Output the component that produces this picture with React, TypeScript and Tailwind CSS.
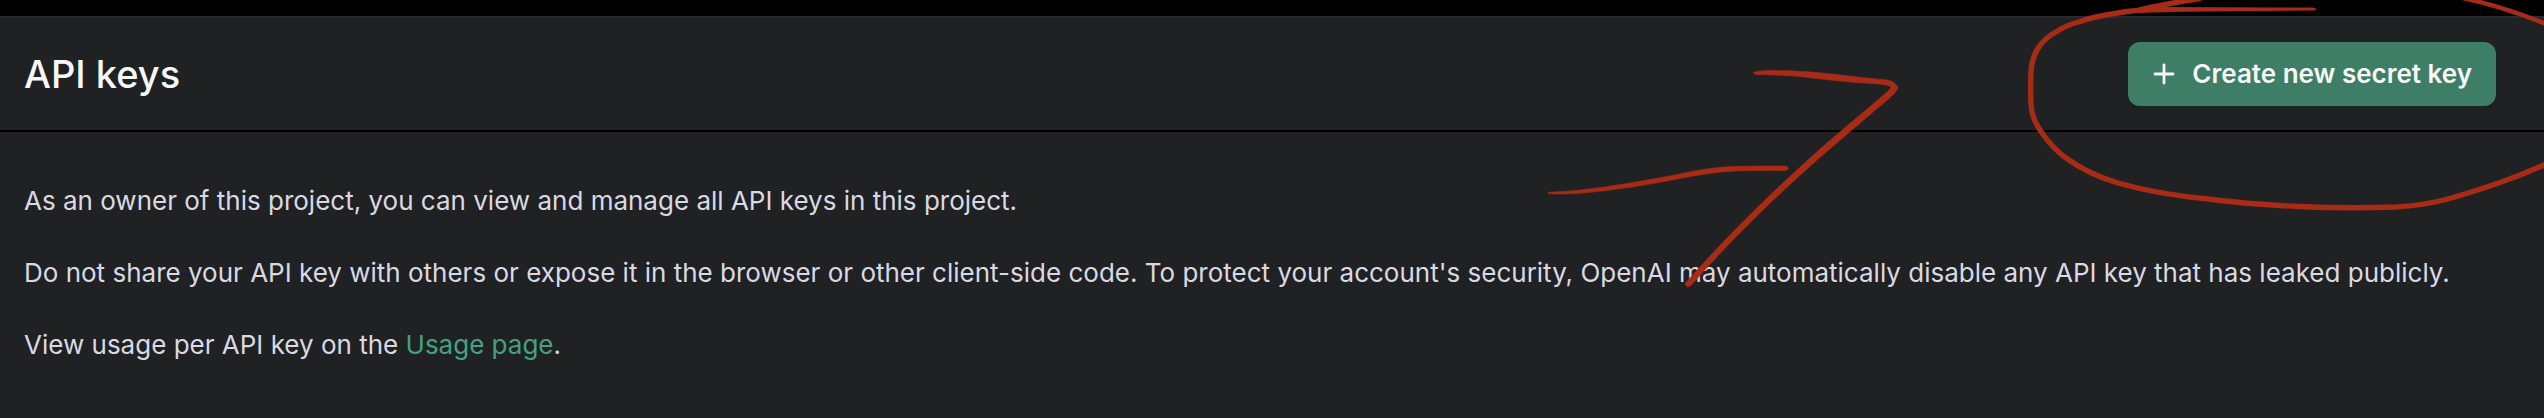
import React from "react";

const notes = [
  "As an owner of this project, you can view and manage all API keys in this project.",
  "Do not share your API key with others or expose it in the browser or other client-side code. To protect your account's security, OpenAI may automatically disable any API key that has leaked publicly.",
];

function PlusIcon() {
  return (
    <svg
      viewBox="0 0 24 24"
      className="size-6 shrink-0"
      fill="none"
      stroke="currentColor"
      strokeWidth="2.8"
      strokeLinecap="round"
      aria-hidden="true"
    >
      <path d="M12 3v18M3 12h18" />
    </svg>
  );
}

// Hand-drawn red marks: an arrow and a loop around the button
function Markup() {
  return (
    <svg
      viewBox="0 0 2544 418"
      preserveAspectRatio="xMaxYMin meet"
      className="pointer-events-none absolute inset-x-0 top-0 w-full text-[#a72b17]"
      fill="currentColor"
      aria-hidden="true"
    >
      {/* Arrow shaft */}
      <path d="M1548 192.5C1557 191.5 1568 191.5 1580 190C1610 187 1635 182 1667 176.5C1690 172 1712 166.5 1740 166.3C1756 166 1772 166 1786 166Q1789 167 1788 169Q1787 170.5 1784 170.5C1770 170.5 1755 170.4 1740 170.7C1700 172 1660 184 1617 189C1600 191.5 1575 194.5 1553 194Q1548 194 1548 192.5Z" stroke="currentColor" strokeWidth="0.6" />
      {/* Arrow head */}
      <path d="M1753.5 72.5C1758 70 1780 70 1800 71.3C1832 73 1850 77 1885 79.7C1893 80.5 1895 83 1898 87.5C1897 91 1893 95 1888 99.5C1860 123 1845 136 1820 157.5C1780 193 1740 230 1691 285.5C1688 288 1684.5 286 1685.5 283C1720 244 1760 203 1815 153.5C1845 127 1865 111 1883 95.5C1888 91 1892 88 1890.5 86.5C1889 85 1880 84 1872 83.5C1840 82 1815 78 1800 76.5C1785 75 1770 75 1757 74.5Q1753 74 1753.5 72.5Z" stroke="currentColor" strokeWidth="0.6" />
      {/* Loop */}
      <g fill="none" stroke="currentColor" strokeWidth="5.4">
        <path d="M2168 9.5C2148 9.5 2132 10 2118 13C2104 15 2092 17 2080 21.5C2070 24 2062 28 2055 32.5C2049 36 2044 40 2040 45.5C2034 53 2031.5 61 2031 72C2030.500 84 2030.500 92 2031 104C2031.500 116 2036 124 2042 133C2049 143 2056 151 2066 158C2081 169 2098 177 2118 183C2146 191 2176 196 2208 199C2238 203 2268 205 2298 206.500C2332 208 2366 208 2396 207C2413 206 2428 204 2444 200C2463 195 2481 189 2500 182.500C2516 177 2531 171 2546 164" />
        <path d="M2201 -2C2180 2 2158 5 2138 10.5" />
        <path strokeWidth="4.4" d="M2458 -3C2488 3 2514 11 2546 24" />
      </g>
      <path d="M2160 7L2313 7.5Q2316 8 2316 9Q2316 10.5 2313 10.5L2160 12Z" />
    </svg>
  );
}

export default function App() {
  return (
    <div className="relative min-h-screen overflow-hidden bg-[#202123] font-['Inter',sans-serif] text-[26px] leading-10 text-[#d9d9e3]">
      <div className="h-4 bg-black" />

      <header className="flex items-center justify-between border-y-2 border-t-[#282934] border-b-black py-6 pr-12 pl-6">
        <h1 className="text-[38px] leading-12 font-medium text-[#f7f7f8]">API keys</h1>
        <button
          type="button"
          className="flex h-16 items-center gap-4 rounded-xl bg-[#3e7e66] px-6 font-semibold text-[#f7f7f8]"
        >
          <PlusIcon />
          Create new secret key
        </button>
      </header>

      <main className="flex flex-col gap-8 px-6 pt-[49px] pb-10">
        {notes.map((note) => (
          <p key={note}>{note}</p>
        ))}
        <p>
          View usage per API key on the{" "}
          <a href="#usage" className="text-[#45a182]">
            Usage page
          </a>
          .
        </p>
      </main>

      <Markup />
    </div>
  );
}
